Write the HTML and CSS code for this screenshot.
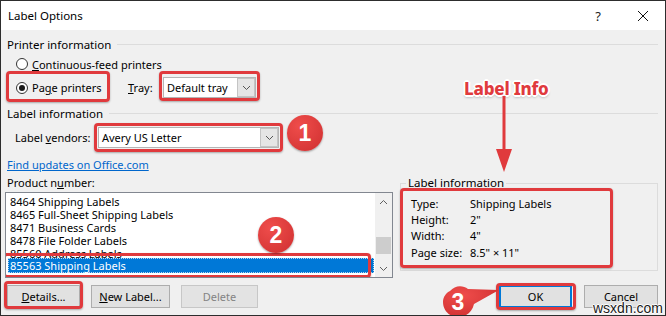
FILE: index.html
```html
<!DOCTYPE html>
<html lang="en">

<head>
    <meta charset="UTF-8">
    <title>Label Options</title>
    <link rel="stylesheet" href="styles.css">
</head>

<body>
    <div class="dialog">
        <div class="titlebar">
            <span class="title">Label Options</span>
            <span class="help">?</span>
            <svg class="close" width="12" height="12" viewBox="0 0 12 12">
                <path d="M1 1 L11 11 M11 1 L1 11" stroke="#111" stroke-width="1" fill="none"/>
            </svg>
        </div>

        <div class="content">
            <div class="group-head"><span>Printer information</span></div>
            <label class="radio row-continuous">
                <span class="dot"></span>
                <span><u>C</u>ontinuous-feed printers</span>
            </label>
            <div class="row row-page">
                <label class="radio checked mark mark-page">
                    <span class="dot"></span>
                    <span>Pa<u>g</u>e printers</span>
                </label>
                <span class="tray-label"><u>T</u>ray:</span>
                <div class="select select-tray mark mark-tray">
                    <span class="select-text">Default tray</span>
                    <span class="drop">
                        <svg width="9" height="6" viewBox="0 0 9 6"><path d="M1 1 L4.5 4.5 L8 1" stroke="#555" fill="none"/></svg>
                    </span>
                </div>
            </div>

            <div class="group-head head-label"><span>Label information</span></div>
            <div class="row row-vendors">
                <span class="vendor-label">Label <u>v</u>endors:</span>
                <div class="select select-vendor mark mark-vendor">
                    <span class="select-text">Avery US Letter</span>
                    <span class="drop">
                        <svg width="9" height="6" viewBox="0 0 9 6"><path d="M1 1 L4.5 4.5 L8 1" stroke="#555" fill="none"/></svg>
                    </span>
                </div>
            </div>
            <a class="link" href="#">Find updates on Office.com</a>

            <div class="lower">
                <div class="products">
                    <div class="product-label">Product n<u>u</u>mber:</div>
                    <div class="listbox">
                        <div class="items">
                            <div class="item">8464 Shipping Labels</div>
                            <div class="item">8465 Full-Sheet Shipping Labels</div>
                            <div class="item">8471 Business Cards</div>
                            <div class="item">8478 File Folder Labels</div>
                            <div class="item">85560 Address Labels</div>
                            <div class="item selected mark mark-selected">85563 Shipping Labels</div>
                        </div>
                        <div class="scrollbar">
                            <span class="arrow">
                                <svg width="9" height="6" viewBox="0 0 9 6"><path d="M1 5 L4.5 1.5 L8 5" stroke="#606060" fill="none"/></svg>
                            </span>
                            <span class="track"><span class="thumb"></span></span>
                            <span class="arrow">
                                <svg width="9" height="6" viewBox="0 0 9 6"><path d="M1 1 L4.5 4.5 L8 1" stroke="#606060" fill="none"/></svg>
                            </span>
                        </div>
                    </div>
                </div>

                <fieldset class="info mark mark-info">
                    <legend>Label information</legend>
                    <div class="info-grid">
                        <span>Type:</span><span>Shipping Labels</span>
                        <span>Height:</span><span>2"</span>
                        <span>Width:</span><span>4"</span>
                        <span>Page size:</span><span>8.5" × 11"</span>
                    </div>
                </fieldset>
            </div>

            <div class="buttons">
                <button class="btn mark mark-details"><u>D</u>etails...</button>
                <button class="btn btn-new"><u>N</u>ew Label...</button>
                <button class="btn btn-delete" disabled>Delete</button>
                <span class="spacer"></span>
                <button class="btn btn-ok mark mark-ok">OK</button>
                <button class="btn btn-cancel">Cancel</button>
            </div>
        </div>

        <!-- annotations -->
        <div class="callout-text">Label Info</div>
        <svg class="callout-arrow" width="18" height="77" viewBox="0 0 18 77">
            <rect x="7.5" y="0" width="3" height="58" fill="#e03a3d"/>
            <path d="M1 53 L17 53 L9 76 Z" fill="#e03a3d"/>
        </svg>
        <span class="badge badge-1">1</span>
        <span class="badge badge-2">2</span>
        <svg class="badge-3" width="62" height="36" viewBox="0 0 62 36">
            <defs>
                <radialGradient id="b3" cx="0.35" cy="0.3" r="0.8">
                    <stop offset="0" stop-color="#ef4d4b"/>
                    <stop offset="1" stop-color="#cf2f30"/>
                </radialGradient>
            </defs>
            <path d="M9 8 C14 2 22 2 27 6 L58 7 L33 21 C31 30 24 34 17 34 C8 34 2 27 2 19 C2 14 5 10 9 8 Z" fill="url(#b3)"/>
            <text x="17" y="27" text-anchor="middle" class="badge-num">3</text>
        </svg>
        <div class="watermark">wsxdn.com</div>
    </div>
</body>
</html>
```

FILE: styles.css
```css
* {
    box-sizing: border-box;
}

body {
    margin: 0;
    font-family: 'Noto Sans', 'Liberation Sans', sans-serif;
    font-size: 11px;
    color: #000;
    background: #fff;
}

u {
    text-decoration: underline;
    text-underline-offset: 1px;
}

.dialog {
    width: 666px;
    height: 316px;
    border: 1px solid #2d2d2d;
    background: #f0f0f0;
    position: relative;
    overflow: hidden;
    display: flex;
    flex-direction: column;
}

/* title bar */
.titlebar {
    height: 29px;
    flex: none;
    background: #fff;
    display: flex;
    align-items: center;
    padding-left: 7px;
    font-size: 11.5px;
}

.title {
    flex: 1;
}

.help {
    margin-right: 36px;
    font-size: 13px;
    color: #222;
}

.close {
    margin-right: 16px;
}

/* body */
.content {
    padding: 0 7px 0 6px;
    display: flex;
    flex-direction: column;
}

.group-head {
    display: flex;
    align-items: center;
    height: 16px;
    margin-top: 6px;
    font-size: 11.5px;
}

.group-head::after {
    content: "";
    flex: 1;
    height: 1px;
    background: #dcdcdc;
    margin-left: 6px;
}

.head-label {
    margin-top: 7px;
}

.row {
    display: flex;
    align-items: center;
}

.radio {
    display: flex;
    align-items: center;
    gap: 4px;
    height: 16px;
    padding-left: 9px;
    white-space: nowrap;
}

.row-continuous {
    margin-top: 4px;
}

.dot {
    width: 12px;
    height: 12px;
    border: 1px solid #333;
    border-radius: 50%;
    background: #fff;
    display: flex;
    align-items: center;
    justify-content: center;
}

.checked .dot::after {
    content: "";
    width: 6px;
    height: 6px;
    border-radius: 50%;
    background: #1a1a1a;
}

.row-page {
    margin-top: 5px;
    height: 21px;
}

.row-page .radio {
    width: 121px;
    height: 21px;
    flex: none;
}

.tray-label {
    width: 35px;
    flex: none;
}

.select {
    display: flex;
    height: 21px;
    background: #fff;
    border: 1px solid #b5b5b5;
    flex: none;
}

.select-text {
    flex: 1;
    padding-left: 3px;
    line-height: 19px;
    white-space: nowrap;
}

.drop {
    width: 18px;
    background: #e5e5e5;
    border: 1px solid #c4c4c4;
    display: flex;
    align-items: center;
    justify-content: center;
}

.select-tray {
    width: 93px;
}

.row-vendors {
    margin-top: 6px;
    height: 21px;
}

.vendor-label {
    width: 91px;
    flex: none;
    padding-left: 8px;
    white-space: nowrap;
}

.select-vendor {
    width: 181px;
}

.link {
    margin-top: 9px;
    height: 16px;
    line-height: 16px;
    color: #0066cc;
    text-decoration: underline;
    align-self: flex-start;
}

/* product list + info */
.lower {
    margin-top: 2px;
    margin-left: -2px;
    display: grid;
    grid-template-columns: 388px 258px;
    column-gap: 7px;
    align-items: start;
}

.product-label {
    height: 16px;
    line-height: 16px;
    padding-left: 2px;
}

.listbox {
    margin-top: 1px;
    height: 86px;
    border: 1px solid #828790;
    background: #fff;
    display: flex;
}

.items {
    flex: 1;
    padding: 2px 1px 0 2px;
    overflow: hidden;
}

.item {
    height: 13px;
    line-height: 13px;
    padding-left: 2px;
    white-space: nowrap;
}

.item.selected {
    height: 15px;
    line-height: 15px;
    margin-top: -2px;
    background: #0078d7;
    color: #fff;
    outline: 1px dotted rgba(255, 255, 255, 0.7);
    outline-offset: -1px;
}

.scrollbar {
    width: 17px;
    background: #f0f0f0;
    display: flex;
    flex-direction: column;
}

.arrow {
    height: 17px;
    display: flex;
    align-items: center;
    justify-content: center;
}

.track {
    flex: 1;
    padding: 27px 1px 0;
}

.thumb {
    display: block;
    height: 17px;
    background: #cdcdcd;
}

.info {
    margin: 0;
    height: 96px;
    padding: 4px 10px 0;
    border: 1px solid #dcdcdc;
}

.info legend {
    margin-left: -5px;
    padding: 0 2px;
    height: 16px;
    line-height: 16px;
    font-size: 11.5px;
}

.info-grid {
    display: grid;
    grid-template-columns: 59px auto;
    grid-auto-rows: 16.4px;
    align-items: center;
}

/* buttons */
.buttons {
    margin-top: 7px;
    display: flex;
    gap: 11px;
}

.btn {
    height: 23px;
    width: 73px;
    font: inherit;
    color: #000;
    background: #e1e1e1;
    border: 1px solid #adadad;
    padding: 0;
}

.btn-new {
    width: 79px;
}

.btn-delete {
    width: 77px;
    color: #838383;
    background: #e3e3e3;
    border-color: #c7c7c7;
}

.spacer {
    flex: 1;
}

.btn-ok {
    border: 1px solid #0078d7;
    box-shadow: inset 0 0 0 1px #0078d7;
    margin-right: 1px;
}

.btn-cancel {
    width: 74px;
}

/* red annotation boxes */
.mark {
    position: relative;
}

.mark::after {
    content: "";
    position: absolute;
    border: 3px solid #e03a3d;
    border-radius: 4px;
    box-shadow: 0 1px 2px rgba(0, 0, 0, 0.3);
    pointer-events: none;
}

.mark-page::after {
    inset: -6px 18px -4px -1px;
}

.mark-tray::after {
    inset: -7px -5px -4px -5px;
}

.mark-vendor::after {
    inset: -5px;
}

.mark-selected {
    outline: none;
}

.mark-selected::after {
    inset: -5px 3px -5px -5px;
}

.mark-info::after {
    inset: -3px 44px 2px -1px;
}

.mark-details::after {
    inset: -5px -4px -2px -4px;
}

.mark-ok::after {
    inset: -3px -5px -3px -4px;
}

.callout-text {
    position: absolute;
    left: 463px;
    top: 76px;
    font-family: 'Noto Sans', sans-serif;
    font-weight: 800;
    font-size: 17px;
    letter-spacing: -0.2px;
    color: #e03a3d;
    text-shadow:
        1px 0 0 #fff, -1px 0 0 #fff, 0 1px 0 #fff, 0 -1px 0 #fff,
        1px 1px 0 #fff, -1px -1px 0 #fff, 1px -1px 0 #fff, -1px 1px 0 #fff,
        2px 0 0 #fff, -2px 0 0 #fff, 0 2px 0 #fff, 0 -2px 0 #fff,
        0 2px 3px rgba(0, 0, 0, 0.4);
}

.callout-arrow {
    position: absolute;
    left: 494px;
    top: 95px;
}

.badge {
    position: absolute;
    width: 36px;
    height: 36px;
    border-radius: 50%;
    background: radial-gradient(circle at 35% 30%, #ef4d4b, #cf2f30);
    box-shadow: 0 1px 2px rgba(0, 0, 0, 0.35);
    color: #fff;
    font-family: 'Liberation Sans', sans-serif;
    font-weight: bold;
    font-size: 23px;
    display: flex;
    align-items: center;
    justify-content: center;
}

.badge-1 {
    left: 286px;
    top: 114px;
}

.badge-2 {
    left: 257px;
    top: 216px;
}

.badge-3 {
    position: absolute;
    left: 440px;
    top: 282px;
}

.badge-num {
    fill: #fff;
    font-family: 'Liberation Sans', sans-serif;
    font-weight: bold;
    font-size: 23px;
}

.watermark {
    position: absolute;
    left: 592px;
    top: 299px;
    font-family: 'Liberation Sans', sans-serif;
    font-size: 14px;
    color: #1a1a1a;
    text-shadow: 1px 0 0 #fff, -1px 0 0 #fff, 0 1px 0 #fff, 0 -1px 0 #fff;
}
```
